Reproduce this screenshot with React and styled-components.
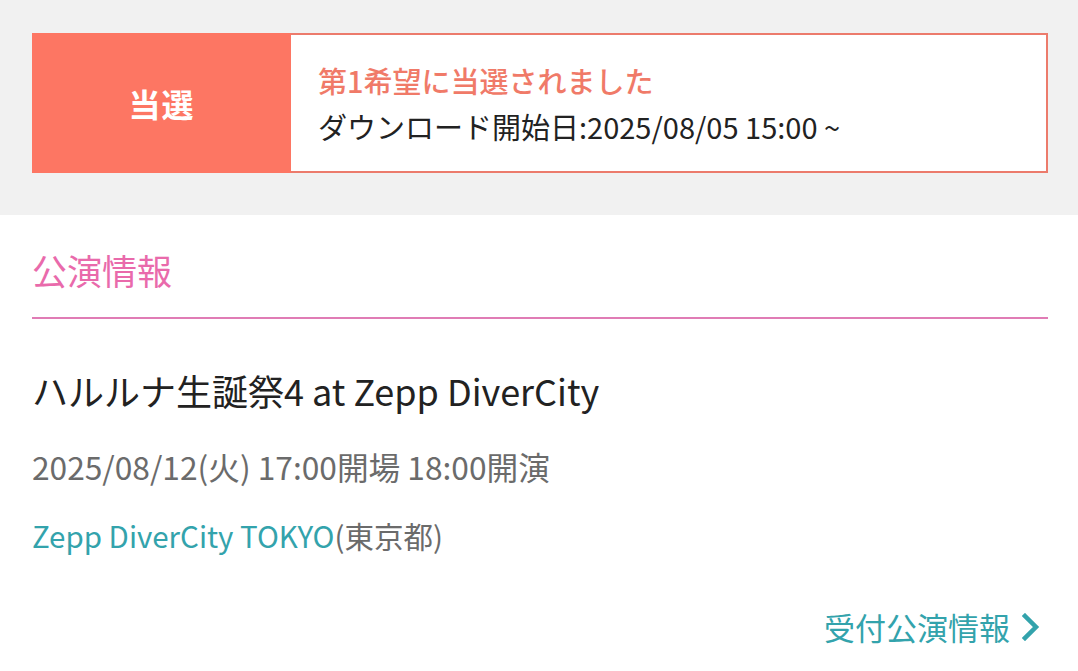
import React from "react";
import styled, { createGlobalStyle } from "styled-components";

const GlobalStyle = createGlobalStyle`
  html, body {
    margin: 0;
    padding: 0;
    background: #fff;
  }
  body {
    font-family: "Noto Sans CJK JP", "Noto Sans", sans-serif;
    color: #222;
  }
`;

const Page = styled.div`
  width: 1078px;
  height: 671px;
  overflow: hidden;
  background: #fff;
`;

const ResultArea = styled.div`
  background: #f1f1f1;
  padding: 33px 30px 42px 32px;
`;

const ResultBox = styled.div`
  display: flex;
  height: 140px;
`;

const Badge = styled.div`
  width: 259px;
  flex-shrink: 0;
  background: #fd7663;
  color: #fff;
  font-size: 32px;
  font-weight: 700;
  display: flex;
  align-items: center;
  justify-content: center;
  letter-spacing: 1px;
`;

const Message = styled.div`
  flex: 1;
  background: #fff;
  border: 2px solid #ec7b6c;
  border-left: none;
  padding: 0 27px;
  display: flex;
  flex-direction: column;
  justify-content: center;
  gap: 4px;
`;

const MessageLine = styled.div`
  font-size: 29px;
  line-height: 42px;
  color: ${(p) => (p.$accent ? "#f07a68" : "#222")};
  font-weight: ${(p) => (p.$accent ? 500 : 400)};
`;

const Section = styled.div`
  padding: 0 30px 0 32px;
`;

const Heading = styled.h2`
  margin: 0;
  height: 104px;
  border-bottom: 2px solid #e07cb5;
  display: flex;
  align-items: center;
  padding-top: 6px;
  box-sizing: border-box;
  font-size: 35px;
  font-weight: 400;
  color: #e96aab;
`;

const Title = styled.div`
  margin-top: 46px;
  font-size: 36px;
  line-height: 50px;
  color: #222;
`;

const DateLine = styled.div`
  margin-top: 29px;
  font-size: 31.7px;
  line-height: 44px;
  color: #6b6b6b;
`;

const Venue = styled.div`
  margin-top: 26px;
  font-size: 29.5px;
  line-height: 42px;
  color: #6b6b6b;
`;

const VenueLink = styled.span`
  color: #33a3ac;
`;

const MoreRow = styled.div`
  margin-top: 49px;
  display: flex;
  justify-content: flex-end;
  padding-right: 8px;
`;

const MoreLink = styled.a`
  display: inline-flex;
  align-items: center;
  gap: 12px;
  font-size: 31px;
  line-height: 44px;
  color: #33a3ac;
  text-decoration: none;
`;

const Chevron = () => (
  <svg width="18" height="28" viewBox="0 0 18 28" fill="none">
    <path d="M3 3 L14 14 L3 25" stroke="#33a3ac" strokeWidth="4.5" strokeLinecap="square" strokeLinejoin="miter" />
  </svg>
);

export default function App() {
  return (
    <>
      <GlobalStyle />
      <Page>
        <ResultArea>
          <ResultBox>
            <Badge>当選</Badge>
            <Message>
              <MessageLine $accent>第1希望に当選されました</MessageLine>
              <MessageLine>ダウンロード開始日:2025/08/05 15:00 ~</MessageLine>
            </Message>
          </ResultBox>
        </ResultArea>
        <Section>
          <Heading>公演情報</Heading>
          <Title>ハルルナ生誕祭4 at Zepp DiverCity</Title>
          <DateLine>2025/08/12(火) 17:00開場 18:00開演</DateLine>
          <Venue>
            <VenueLink>Zepp DiverCity TOKYO</VenueLink>(東京都)
          </Venue>
          <MoreRow>
            <MoreLink href="#">
              受付公演情報
              <Chevron />
            </MoreLink>
          </MoreRow>
        </Section>
      </Page>
    </>
  );
}
